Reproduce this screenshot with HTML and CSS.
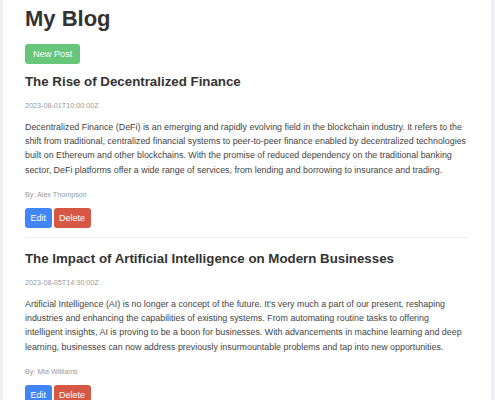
FILE: index.html
```html
<!DOCTYPE html>
<html lang="en">
<head>
<meta charset="utf-8">
<title>My Blog</title>
<link rel="stylesheet" href="styles.css">
</head>
<body>
<div class="container">
  <h1 class="title">My Blog</h1>
  <button class="btn btn-new">New Post</button>
  <div class="posts">
    <article class="post">
      <h2 class="post-title">The Rise of Decentralized Finance</h2>
      <div class="post-date">2023-08-01T10:00:00Z</div>
      <p class="post-body">Decentralized Finance (DeFi) is an emerging and rapidly evolving field in the blockchain industry. It refers to the shift from traditional, centralized financial systems to peer-to-peer finance enabled by decentralized technologies built on Ethereum and other blockchains. With the promise of reduced dependency on the traditional banking sector, DeFi platforms offer a wide range of services, from lending and borrowing to insurance and trading.</p>
      <div class="post-author">By: Alex Thompson</div>
      <div class="post-actions">
        <button class="btn btn-small btn-edit">Edit</button>
        <button class="btn btn-small btn-delete">Delete</button>
      </div>
    </article>
    <article class="post">
      <h2 class="post-title">The Impact of Artificial Intelligence on Modern Businesses</h2>
      <div class="post-date">2023-08-05T14:30:00Z</div>
      <p class="post-body">Artificial Intelligence (AI) is no longer a concept of the future. It's very much a part of our present, reshaping industries and enhancing the capabilities of existing systems. From automating routine tasks to offering intelligent insights, AI is proving to be a boon for businesses. With advancements in machine learning and deep learning, businesses can now address previously insurmountable problems and tap into new opportunities.</p>
      <div class="post-author">By: Mia Williams</div>
      <div class="post-actions">
        <button class="btn btn-small btn-edit">Edit</button>
        <button class="btn btn-small btn-delete">Delete</button>
      </div>
    </article>
  </div>
</div>
</body>
</html>
```

FILE: styles.css
```css
html, body {
  margin: 0;
  padding: 0;
  background: #eff0f3;
  font-family: "Liberation Sans", Arial, sans-serif;
  color: #444;
}

.container {
  background: #fff;
  margin: 0 4px 0 3px;
  padding: 6px 23px 20px 22px;
  min-height: 400px;
  box-sizing: border-box;
}

.title {
  margin: 0;
  font-size: 22px;
  line-height: normal;
  font-weight: bold;
  color: #333;
}

.btn {
  border: none;
  border-radius: 3px;
  color: #fff;
  font-family: "Liberation Sans", Arial, sans-serif;
  font-size: 9.2px;
  line-height: normal;
  height: 20px;
  padding: 0 8px;
  cursor: pointer;
  margin: 0;
}

.btn-small {
  font-size: 9px;
  padding: 0 5.5px;
}

.btn-new {
  margin-top: 12px;
  background: #68c67b;
  display: block;
}

.posts {
  margin-top: 10px;
}

.post {
  padding-bottom: 9px;
  border-bottom: 1px solid #eee;
  margin-bottom: 13px;
}

.post-title {
  margin: 0;
  font-size: 13.3px;
  line-height: normal;
  font-weight: bold;
  color: #333;
}

.post-date {
  margin-top: 11.5px;
  font-size: 7.2px;
  line-height: normal;
  color: #999;
}

.post-body {
  margin: 10px 0 0;
  font-size: 8.9px;
  line-height: 14.4px;
  color: #444;
}

.post-author {
  margin-top: 12.5px;
  font-size: 7.2px;
  line-height: normal;
  color: #999;
}

.post-actions {
  margin-top: 9.5px;
  display: flex;
  gap: 2px;
}

.btn-edit {
  background: #4285f4;
}

.btn-delete {
  background: #d75746;
}
```
